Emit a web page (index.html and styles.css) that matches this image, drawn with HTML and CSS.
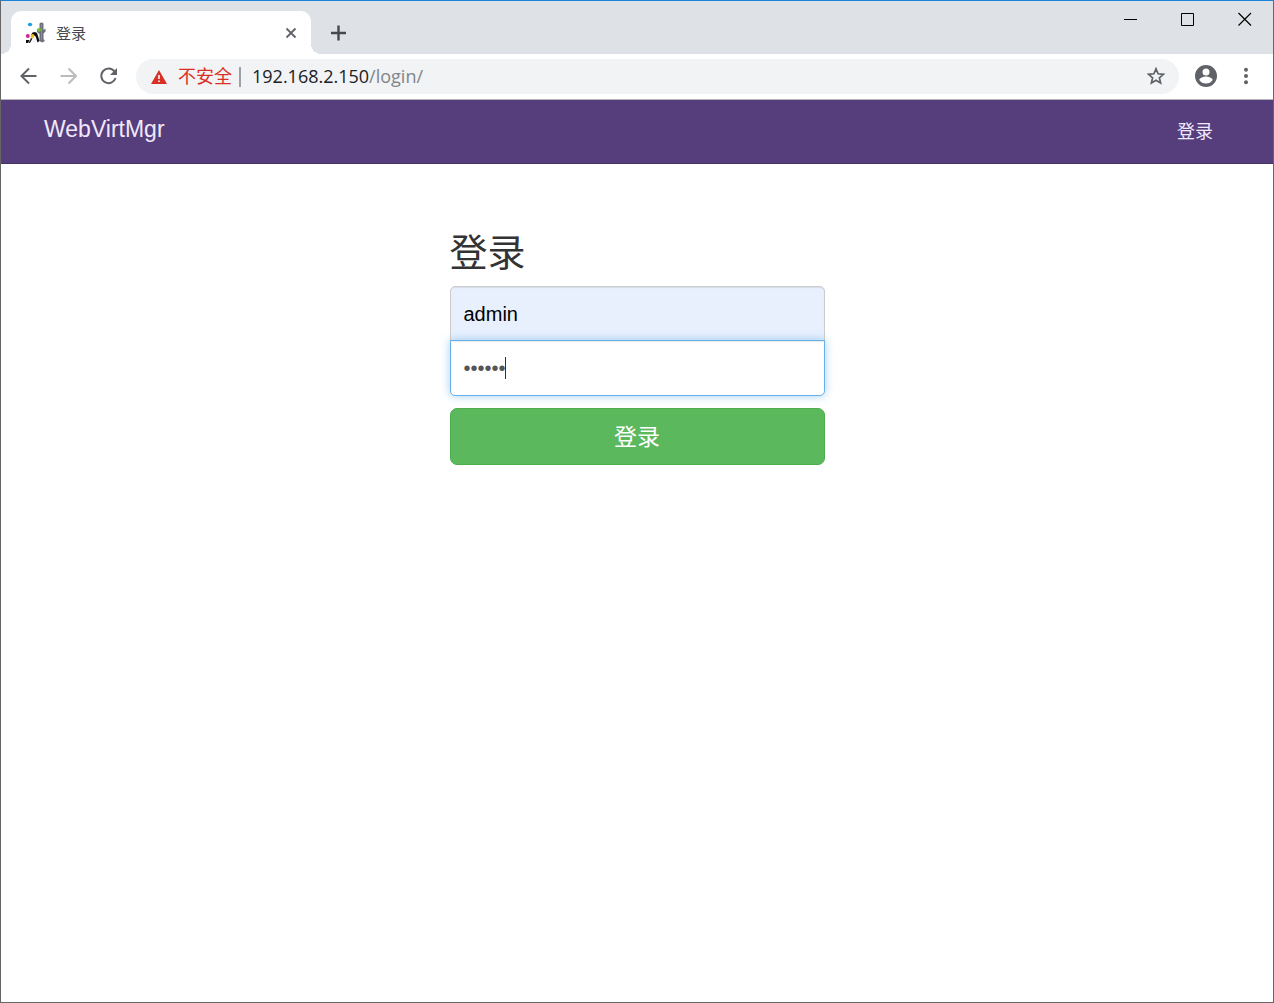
FILE: index.html
```html
<!DOCTYPE html>
<html lang="zh-CN">
<head>
<meta charset="utf-8">
<meta name="viewport" content="width=device-width, initial-scale=1">
<title>登录</title>
<link rel="stylesheet" href="styles.css">
</head>
<body>
<div class="window">
  <header class="tabstrip">
    <div class="tab">
      <svg class="favicon" viewBox="0 0 22 22" aria-hidden="true">
        <path d="M14.500 1.500c1-1.300 3-1.300 4 0V8l2-1.500v3l-2 2V17l1.500 2-3 1.500-2.500-1.500V12l-2.500-2V7l2.500 1z" fill="#6d6f7c"/>
        <path d="M16 2h1v16h-1z" fill="#8a8b98"/>
        <path d="M6 13l1.500-2.500L10 10l2 1 1 3 1.500 5-2 1.500-1.500-5-1-2-3 1zM1 18h3.500L3 21H1z" fill="#0c0c0e"/>
        <path d="M6 16l1.500.5L5 21H3.500z" fill="#26262a"/>
        <path d="M8.500 15l2 .5 1 4.500H7z" fill="#f5f5f5"/>
        <ellipse cx="5" cy="2.500" rx="2.200" ry="1.800" fill="#1d9fdc"/>
        <circle cx="14" cy="7.800" r="1.900" fill="#72c42c"/>
        <circle cx="2.800" cy="14" r="2" fill="#d9218e"/>
        <circle cx="7.500" cy="14" r="1.900" fill="#f0c20c"/>
      </svg>
      <span class="tab-title">登录</span>
      <button class="icon-button tab-close" type="button" aria-label="关闭标签页">
        <svg width="12" height="12" viewBox="0 0 12 12"><path d="M1.500 1.500l9 9M10.500 1.500l-9 9" stroke="#5f6368" stroke-width="1.800" fill="none"/></svg>
      </button>
    </div>
    <button class="icon-button new-tab" type="button" aria-label="新标签页">
      <svg width="16" height="16" viewBox="0 0 16 16"><path d="M8.500 .5v15M1 8h15" stroke="#45484c" stroke-width="2.400" fill="none"/></svg>
    </button>
    <div class="window-controls">
      <button class="icon-button" type="button" aria-label="最小化"><svg width="14" height="14" viewBox="0 0 14 14"><path d="M0 7.500h13" stroke="#000"/></svg></button>
      <button class="icon-button" type="button" aria-label="最大化"><svg width="14" height="14" viewBox="0 0 14 14"><path d="M.5 1.500h12v12H.5z" stroke="#000" fill="none"/></svg></button>
      <button class="icon-button" type="button" aria-label="关闭"><svg width="14" height="14" viewBox="0 0 14 14"><path d="M.5 1l12.500 12.500M13 1L.5 13.500" stroke="#000" stroke-width="1.200"/></svg></button>
    </div>
  </header>

  <div class="toolbar">
    <button class="icon-button" type="button" aria-label="后退"><svg width="18" height="18" viewBox="0 0 18 18"><path d="M17.500 9H2.500M10 1.500L2.500 9 10 16.500" stroke="#5f6368" stroke-width="2" fill="none"/></svg></button>
    <button class="icon-button" type="button" aria-label="前进" disabled><svg width="18" height="18" viewBox="0 0 18 18"><path d="M1.500 9h15M9.500 1.500L17 9 9.500 16.500" stroke="#babcbe" stroke-width="2" fill="none"/></svg></button>
    <button class="icon-button" type="button" aria-label="重新加载"><svg width="18" height="18" viewBox="0 0 18 18"><path d="M15.500 4.500A7.300 7.300 0 1 0 16.600 11" stroke="#5f6368" stroke-width="2" fill="none"/><path d="M18 1v7h-7z" fill="#5f6368"/></svg></button>
    <div class="omnibox">
      <svg class="warning" width="16" height="14" viewBox="0 0 16 14" aria-hidden="true"><path d="M8 0l8 14H0z" fill="#d93025"/><path d="M7.200 5h1.600v4H7.200zM7.200 10.400h1.600V12H7.200z" fill="#fff"/></svg>
      <span class="insecure">不安全</span>
      <span class="address">192.168.2.150<span class="path">/login/</span></span>
      <button class="icon-button star" type="button" aria-label="收藏"><svg width="18" height="18" viewBox="0 0 18 18"><path d="M9 1.800l2.100 5 5.300.5-4 3.500 1.200 5.200L9 13.200 4.400 16l1.200-5.200-4-3.500 5.300-.5z" stroke="#5f6368" stroke-width="1.700" fill="none"/></svg></button>
    </div>
    <button class="icon-button" type="button" aria-label="个人资料"><svg width="22" height="22" viewBox="0 0 22 22"><path fill="#5f6368" fill-rule="evenodd" d="M11 0a11 11 0 1 0 0 22 11 11 0 0 0 0-22zm0 3.500a3.500 3.500 0 1 1 0 7 3.500 3.500 0 0 1 0-7zM11 18.500a8 8 0 0 1-6.700-3.500c.2-2.300 4.500-3.500 6.700-3.500s6.500 1.200 6.700 3.500a8 8 0 0 1-6.700 3.500z"/></svg></button>
    <button class="icon-button" type="button" aria-label="菜单"><svg width="18" height="18" viewBox="0 0 18 18" fill="#5f6368"><circle cx="9" cy="2.800" r="2"/><circle cx="9" cy="9" r="2"/><circle cx="9" cy="15.200" r="2"/></svg></button>
  </div>

  <nav class="navbar">
    <a class="brand" href="#">WebVirtMgr</a>
    <a class="nav-link" href="#login">登录</a>
  </nav>

  <main class="page">
    <form class="signin" id="login">
      <h1 class="signin-heading">登录</h1>
      <input class="field" type="text" name="username" value="admin" aria-label="用户名">
      <div class="password">
        <input class="field field-active" type="password" name="password" value="secret" aria-label="密码">
        <span class="caret"></span>
      </div>
      <button class="submit" type="submit">登录</button>
    </form>
  </main>
</div>
</body>
</html>
```
FILE: styles.css
```css
* {
  box-sizing: border-box;
}

body {
  margin: 0;
  background: #fff;
  color: #333;
  font-family: "Liberation Sans", "Noto Sans CJK SC", sans-serif;
  font-size: 20px;
}

a {
  text-decoration: none;
}

.window {
  min-height: 100vh;
  border: 1px solid #666;
  border-top-color: #1883d7;
}

.icon-button {
  display: flex;
  align-items: center;
  justify-content: center;
  flex: none;
  width: 40px;
  height: 40px;
  padding: 0;
  border: 0;
  background: none;
}

/* Tab strip */
.tabstrip {
  display: flex;
  align-items: flex-end;
  height: 53px;
  padding-left: 10px;
  background: #dee1e6;
}

.tab {
  position: relative;
  display: flex;
  align-items: center;
  width: 300px;
  height: 43px;
  padding: 0 10px 0 14px;
  border-radius: 10px 10px 0 0;
  background: #fff;
}

.tab::before,
.tab::after {
  content: "";
  position: absolute;
  bottom: 0;
  width: 10px;
  height: 10px;
}

.tab::before {
  right: 100%;
  background: radial-gradient(circle at 0 0, #dee1e6 10px, #fff 10px);
}

.tab::after {
  left: 100%;
  background: radial-gradient(circle at 100% 0, #dee1e6 10px, #fff 10px);
}

.favicon {
  width: 22px;
  height: 22px;
}

.tab-title {
  flex: 1;
  margin-left: 9px;
  padding-bottom: 1px;
  color: #45484c;
  font-size: 15px;
}

.tab-close {
  width: 20px;
  height: 20px;
}

.new-tab {
  width: 54px;
  height: 43px;
}

.window-controls {
  display: flex;
  align-self: flex-start;
  margin-left: auto;
}

.window-controls .icon-button {
  width: 57px;
  height: 36px;
}

/* Toolbar */
.toolbar {
  display: flex;
  align-items: center;
  height: 46px;
  padding: 0 7px;
  border-bottom: 1px solid #b5b4b6;
  background: #fff;
}

.toolbar .icon-button {
  padding-bottom: 2px;
}

.omnibox {
  display: flex;
  flex: 1;
  align-items: center;
  height: 35px;
  margin: 0 7px 0 8px;
  padding: 0 3px 0 15px;
  border-radius: 18px;
  background: #f1f3f4;
  font-size: 18px;
  line-height: 20px;
}

.insecure {
  margin-left: 11px;
  padding-right: 7px;
  border-right: 2px solid #9aa0a6;
  color: #d93025;
}

.address {
  margin-left: 11px;
  padding-bottom: 2px;
  color: #202124;
  font-family: "Open Sans", "Noto Sans", sans-serif;
}

.path {
  color: #80868b;
}

.star {
  margin-left: auto;
}

/* Site navigation */
.navbar {
  display: flex;
  align-items: center;
  justify-content: space-between;
  height: 64px;
  padding: 0 60px 4px 43px;
  border-bottom: 1px solid #463265;
  background: #563d7c;
}

.brand {
  color: #f0e8fb;
  font-size: 23px;
}

.nav-link {
  color: #f0e8fb;
  font-size: 18px;
}

/* Sign-in form */
.page {
  padding: 64px 20px;
}

.signin {
  display: flex;
  flex-direction: column;
  max-width: 375px;
  margin: 0 auto;
}

.signin-heading {
  margin: 0 0 8px;
  font-size: 38px;
  font-weight: 400;
  line-height: 50px;
}

.field {
  display: block;
  width: 100%;
  height: 56px;
  padding: 0 13px;
  border: 1px solid #ccc;
  border-radius: 5px 5px 0 0;
  outline: 0;
  background: #e8f0fe;
  box-shadow: inset 0 1px 1px rgba(0, 0, 0, 0.08);
  color: #000;
  font: inherit;
}

.password {
  position: relative;
  margin: -2px 0 12px;
}

.field-active {
  border-color: #66afe9;
  border-radius: 0 0 5px 5px;
  background: #fff;
  box-shadow: inset 0 1px 1px rgba(0, 0, 0, 0.08), 0 0 10px rgba(102, 175, 233, 0.6);
  color: #555;
}

.caret {
  position: absolute;
  top: 17px;
  left: 55px;
  width: 1px;
  height: 22px;
  background: #333;
}

.submit {
  height: 57px;
  padding: 0 0 4px;
  border: 1px solid #4cae4c;
  border-radius: 7px;
  background: #5cb85c;
  color: #fff;
  font-family: inherit;
  font-size: 23px;
}
```
